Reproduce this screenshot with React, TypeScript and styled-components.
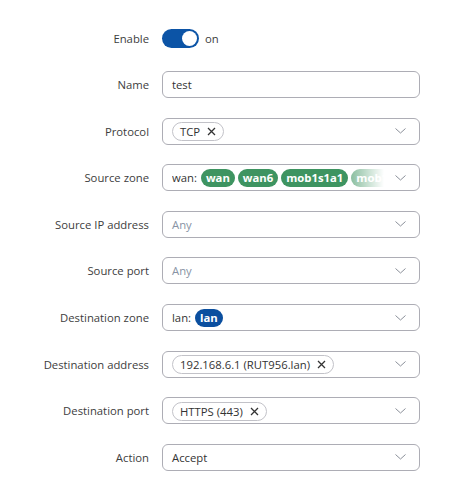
import React from "react";
import styled, { createGlobalStyle } from "styled-components";

const Global = createGlobalStyle`
  html, body { margin: 0; padding: 0; background: #ffffff; }
  body { font-family: "Open Sans", "Noto Sans", sans-serif; }
`;

const Form = styled.div`
  display: grid;
  grid-template-columns: 149px 258px;
  column-gap: 13px;
  row-gap: 19.6px;
  padding-top: 24.5px;
  align-items: center;
`;

const Label = styled.div`
  text-align: right;
  font-size: 11.3px;
  color: #3d3d3d;
  line-height: 27px;
  height: 27px;
  white-space: nowrap;
`;

const ToggleWrap = styled.div`
  display: flex;
  align-items: center;
  gap: 6px;
  height: 27px;
  font-size: 11.3px;
  color: #3d3d3d;
`;

const Track = styled.div`
  width: 37px;
  height: 19px;
  border-radius: 10px;
  background: #0c54a6;
  position: relative;
  box-sizing: border-box;
`;

const Knob = styled.div`
  position: absolute;
  right: 2px;
  top: 2px;
  width: 15px;
  height: 15px;
  border-radius: 50%;
  background: #ffffff;
`;

const Field = styled.div`
  position: relative;
  box-sizing: border-box;
  height: 27px;
  border: 1px solid #adadb5;
  border-radius: 6px;
  display: flex;
  align-items: center;
  padding: 0 31px 0 9px;
  font-size: 11.3px;
  color: #333333;
  background: #fff;
  overflow: hidden;
  white-space: nowrap;
`;

const Placeholder = styled.span`
  color: #8893a4;
`;

const Chevron = styled.svg`
  position: absolute;
  right: 13px;
  top: 50%;
  margin-top: -3px;
`;

const Chip = styled.span`
  display: inline-flex;
  align-items: center;
  gap: 7px;
  height: 19px;
  box-sizing: border-box;
  border: 1px solid #c2c2c8;
  border-radius: 10px;
  padding: 0 7px 0 7px;
  margin-top: 1px;
  font-size: 11.3px;
  color: #333;
`;

const ZoneChips = styled.div`
  display: flex;
  align-items: center;
  gap: 3px;
  position: relative;
  flex: 1;
  min-width: 0;
  overflow: hidden;
`;

const ZonePrefix = styled.span`
  margin-right: 1px;
  flex-shrink: 0;
`;

const ZoneChip = styled.span<{ $color: string }>`
  display: inline-flex;
  align-items: center;
  height: 18px;
  border-radius: 9px;
  padding: 0 5px;
  background: ${(p) => p.$color};
  color: #fff;
  font-weight: 700;
  font-size: 11.3px;
  flex-shrink: 0;
`;

const Fade = styled.div`
  position: absolute;
  right: 0;
  top: 0;
  bottom: 0;
  width: 40px;
  background: linear-gradient(to right, rgba(255,255,255,0.35), #ffffff 90%);
  pointer-events: none;
`;

const ChevronIcon = () => (
  <Chevron width="11" height="6" viewBox="0 0 11 6">
    <path d="M0.5 0.5 L5.5 5 L10.5 0.5" fill="none" stroke="#8a8f99" strokeWidth="1" />
  </Chevron>
);

const XIcon = () => (
  <svg width="9" height="9" viewBox="0 0 9 9">
    <path d="M1 1 L8 8 M8 1 L1 8" stroke="#333" strokeWidth="1.3" />
  </svg>
);

const Select: React.FC<{ children: React.ReactNode }> = ({ children }) => (
  <Field>
    {children}
    <ChevronIcon />
  </Field>
);

export default function App() {
  const green = "#3e9461";
  return (
    <>
      <Global />
      <Form>
        <Label>Enable</Label>
        <ToggleWrap>
          <Track>
            <Knob />
          </Track>
          on
        </ToggleWrap>

        <Label>Name</Label>
        <Field>test</Field>

        <Label>Protocol</Label>
        <Select>
          <Chip>
            TCP <XIcon />
          </Chip>
        </Select>

        <Label>Source zone</Label>
        <Select>
          <ZoneChips>
            <ZonePrefix>wan:</ZonePrefix>
            <ZoneChip $color={green}>wan</ZoneChip>
            <ZoneChip $color={green}>wan6</ZoneChip>
            <ZoneChip $color={green}>mob1s1a1</ZoneChip>
            <ZoneChip $color={green}>mob1s1a2</ZoneChip>
            <Fade />
          </ZoneChips>
        </Select>

        <Label>Source IP address</Label>
        <Select>
          <Placeholder>Any</Placeholder>
        </Select>

        <Label>Source port</Label>
        <Select>
          <Placeholder>Any</Placeholder>
        </Select>

        <Label>Destination zone</Label>
        <Select>
          <ZoneChips>
            <ZonePrefix>lan:</ZonePrefix>
            <ZoneChip $color="#0b4f9f">lan</ZoneChip>
          </ZoneChips>
        </Select>

        <Label>Destination address</Label>
        <Select>
          <Chip>
            192.168.6.1 (RUT956.lan) <XIcon />
          </Chip>
        </Select>

        <Label>Destination port</Label>
        <Select>
          <Chip>
            HTTPS (443) <XIcon />
          </Chip>
        </Select>

        <Label>Action</Label>
        <Select>Accept</Select>
      </Form>
    </>
  );
}
